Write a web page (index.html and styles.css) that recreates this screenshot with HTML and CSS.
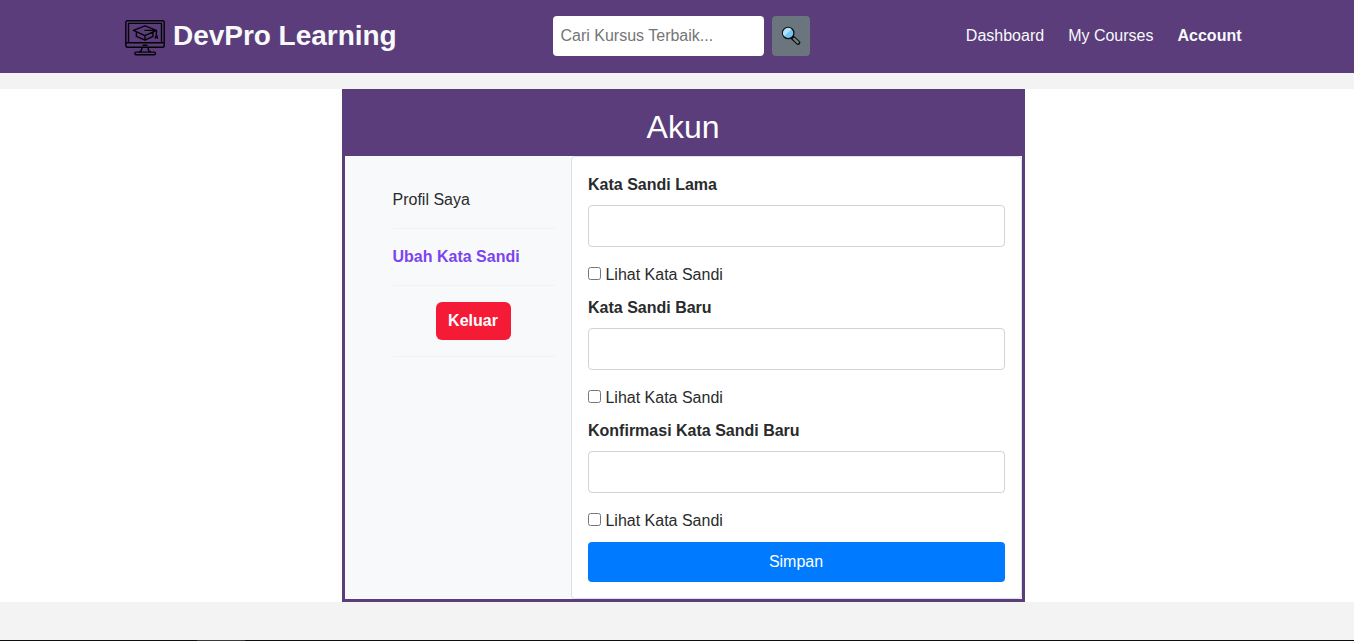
FILE: index.html
```html
<!DOCTYPE html>
<html lang="id">
<head>
<meta charset="utf-8">
<title>DevPro Learning</title>
<link rel="stylesheet" href="styles.css">
</head>
<body>
<header class="navbar">
  <a class="brand">
    <svg class="logo" viewBox="0 0 40 36" fill="none" stroke="#050308" stroke-width="1.4" stroke-linejoin="round" stroke-linecap="round">
      <rect x=".8" y=".8" width="38.4" height="26.4" rx="1.8"/>
      <path d="M3.5 22.2V3.4H36.5V22.2M.8 22.8H39.2M18 25.2H22"/>
      <path d="M17 27.6C17 30.6 16.4 31.2 14.6 31.9M23 27.6C23 30.6 23.6 31.2 25.4 31.9"/>
      <rect x="9.8" y="32.1" width="20.6" height="2.6" rx="1.2"/>
      <path d="M20 5.9L31.4 10.4 20 15.6 8.4 10.4ZM11.4 12V16.4L20 20.2 28 16.4V12M20 15.6V20M20 10.4H31.4V15.6M31.4 15L30.2 18.2M31.4 15L32.6 18.2"/>
    </svg>
    <span class="brand-name">DevPro Learning</span>
  </a>
  <form class="search">
    <input class="search-input" type="text" placeholder="Cari Kursus Terbaik...">
    <button class="search-button" type="button" aria-label="Cari">
      <svg class="search-icon" viewBox="0 0 20 20">
        <path d="M11.6 11.6L17 16.6" stroke="#111" stroke-width="4.6" stroke-linecap="round"/>
        <path d="M13 12.8L16.8 16.4" stroke="#75838a" stroke-width="2.2" stroke-linecap="round"/>
        <circle cx="7.2" cy="7" r="5.7" fill="#6fc7f5" stroke="#111" stroke-width="1.3"/>
        <path d="M3.3 10.2A5 5 0 0 1 10.4 3.2Z" fill="#b5e2fa"/>
      </svg>
    </button>
  </form>
  <nav class="links">
    <a>Dashboard</a>
    <a>My Courses</a>
    <a class="current">Account</a>
  </nav>
</header>
<main class="page">
  <section class="panel">
    <h1 class="panel-title">Akun</h1>
    <div class="panel-body">
      <aside class="menu">
        <div class="menu-item">Profil Saya</div>
        <div class="menu-item active">Ubah Kata Sandi</div>
        <div class="menu-item logout-row"><button class="logout" type="button">Keluar</button></div>
      </aside>
      <form class="card">
        <label class="field-label" for="old">Kata Sandi Lama</label>
        <input class="field" id="old" type="password">
        <label class="show"><input class="check" type="checkbox">Lihat Kata Sandi</label>
        <label class="field-label" for="new">Kata Sandi Baru</label>
        <input class="field" id="new" type="password">
        <label class="show"><input class="check" type="checkbox">Lihat Kata Sandi</label>
        <label class="field-label" for="confirm">Konfirmasi Kata Sandi Baru</label>
        <input class="field" id="confirm" type="password">
        <label class="show"><input class="check" type="checkbox">Lihat Kata Sandi</label>
        <button class="save" type="button">Simpan</button>
      </form>
    </div>
  </section>
</main>
<footer class="footer"><div class="footer-mark"></div></footer>
</body>
</html>
```
FILE: styles.css
```css
* { box-sizing: border-box; }
body {
  margin: 0;
  height: 641px;
  overflow: hidden;
  display: flex;
  flex-direction: column;
  background: #f3f3f3;
  color: #292b2c;
  font: 16px/24px "Liberation Sans", Arial, sans-serif;
}
button, input { font: inherit; margin: 0; }
.navbar {
  height: 73px;
  padding: 16px 112.5px 17px 125px;
  display: flex;
  justify-content: space-between;
  background: #5a3d7a;
  color: #f8f9fa;
}
.brand { display: flex; width: 428px; height: 40px; }
.logo { width: 40px; height: 36px; margin: 4px 8px 0 0; }
.brand-name { font-size: 28px; font-weight: bold; line-height: 40px; letter-spacing: -0.03px; white-space: nowrap; }
.search { display: flex; gap: 8px; margin-right: auto; }
.search-input {
  width: 211px;
  height: 40px;
  padding: 0 7.5px;
  border: 0;
  border-radius: 4px;
  background: #fff;
}
.search-input::placeholder { color: #757575; }
.search-button {
  width: 38px;
  height: 40px;
  padding: 0 1px 1px 0;
  border: 0;
  border-radius: 4px;
  background: #6a757d;
  display: flex;
  align-items: center;
  justify-content: center;
}
.search-icon { width: 20px; height: 20px; }
.links { display: flex; gap: 24px; padding-top: 8px; }
.current { font-weight: bold; }
.page {
  margin-top: 16px;
  height: 513px;
  padding-left: 342px;
  background: #fff;
}
.panel {
  width: 683px;
  height: 513px;
  border: 3px solid #5a3d7a;
  display: flex;
  flex-direction: column;
}
.panel-title {
  margin: 0;
  height: 64px;
  padding: 16px 1px 0 0;
  background: #5a3d7a;
  color: #fff;
  font-size: 32px;
  font-weight: normal;
  line-height: 38px;
  text-align: center;
}
.panel-body { flex: 1; display: flex; background: #f8f9fb; }
.menu { width: 226px; padding: 16px 16.5px 0 47.5px; }
.menu-item {
  padding: 16px 0;
  border-bottom: 1px solid #f1f2f4;
}
.active { color: #7c44f0; font-weight: bold; }
.logout-row { display: flex; justify-content: center; padding-right: 1px; }
.logout {
  width: 75px;
  height: 38px;
  padding: 0;
  border: 0;
  border-radius: 6px;
  background: #f51b36;
  color: #fff;
  font-weight: bold;
}
.card {
  width: 451px;
  padding: 16px;
  border: 1px solid #dce1e5;
  border-radius: 4px;
  background: #fff;
  display: flex;
  flex-direction: column;
}
.field-label { margin-bottom: 8px; font-weight: bold; }
.field {
  height: 42px;
  border: 1px solid #ced4da;
  border-radius: 4px;
  margin-bottom: 16px;
}
.show { display: flex; margin-bottom: 9px; }
.check { width: 13px; height: 13px; margin: 4px 4.45px 0 0; }
.save {
  height: 40px;
  padding: 0 1px 0 0;
  border: 0;
  border-radius: 4px;
  background: #007bff;
  color: #fff;
}
.footer { margin-top: auto; height: 1px; padding-left: 197px; background: #0d0d0d; }
.footer-mark { width: 48px; height: 1px; background: #3a3a3a; }
```
